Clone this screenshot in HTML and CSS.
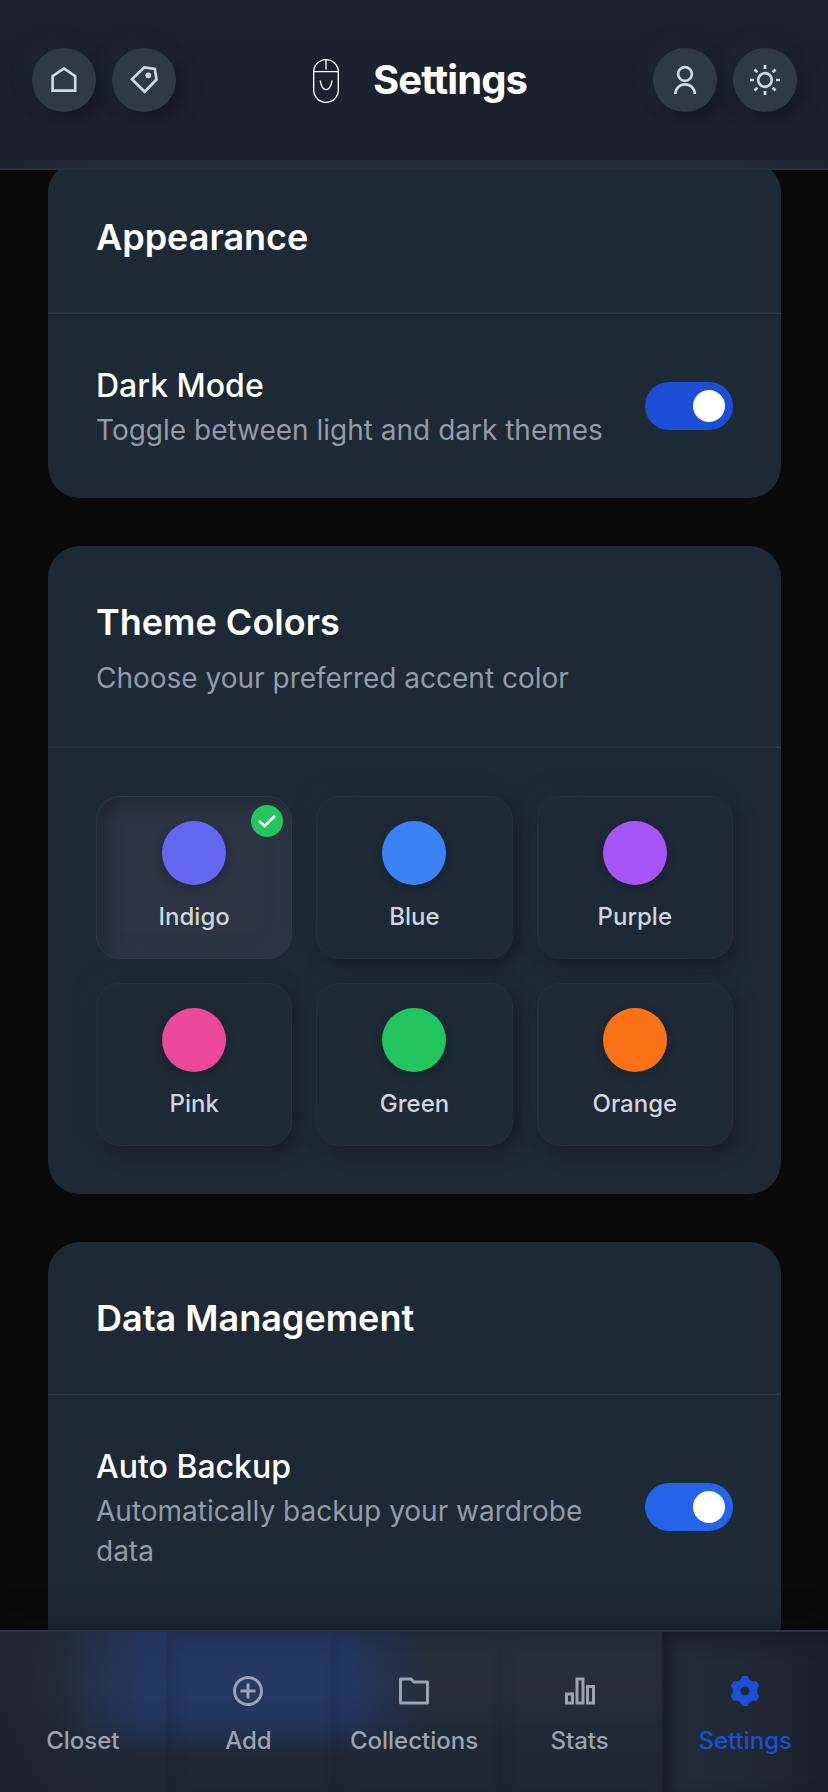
FILE: index.html
```html
<!DOCTYPE html>
<html lang="en">
<head>
<meta charset="utf-8">
<title>Settings</title>
<link rel="stylesheet" href="styles.css">
</head>
<body>
<div class="app">
  <header class="header">
    <div class="group">
      <button class="round" aria-label="Home"><svg viewBox="0 0 64 64"><path d="M20.6 42.7V28.2L32 20.5L43.2 28.2V42.7Z"/></svg></button>
      <button class="round" aria-label="Tags"><svg viewBox="0 0 64 64"><path d="M32.2 19.4L42.8 20.9L44.5 31.5L32.7 43.8L20 31.3Z"/><circle class="solid" cx="36.3" cy="27.3" r="2.9"/></svg></button>
    </div>
    <div class="brand">
      <svg class="logo" viewBox="0 0 26 44"><rect x=".7" y=".7" width="24.6" height="42.6" rx="12.3"/><path d="M.7 12.6H25.3M13 .7V10M7.2 21.8C8.3 27.5 10 30.6 13 30.6S17.9 27.5 19 21.8"/></svg>
      <h1>Settings</h1>
    </div>
    <div class="group">
      <button class="round" aria-label="Profile"><svg viewBox="0 0 64 64"><circle cx="32" cy="26" r="6.9"/><path d="M22.4 46A9.7 9.7 0 0 1 41.8 46"/></svg></button>
      <button class="round" aria-label="Theme"><svg viewBox="0 0 64 64"><circle cx="32" cy="32" r="6.8"/><path d="M32 17V21M32 43V47M17 32H21M43 32H47M21.5 21.5L24.3 24.3M39.7 39.7L42.5 42.5M21.5 42.5L24.3 39.7M39.7 24.3L42.5 21.5"/></svg></button>
    </div>
  </header>
  <div class="header-edge"></div>

  <main class="content">
    <section class="card">
      <div class="card-head"><h2>Appearance</h2></div>
      <div class="row">
        <div class="row-text"><h3>Dark Mode</h3><p>Toggle between light and dark themes</p></div>
        <span class="toggle deep"></span>
      </div>
    </section>

    <section class="card">
      <div class="card-head"><h2>Theme Colors</h2><p class="sub">Choose your preferred accent color</p></div>
      <div class="grid">
        <div class="tile selected"><i class="dot indigo"></i><span>Indigo</span><b class="check"><svg viewBox="0 0 32 32"><path d="M8 16L13.8 21L24 10.8"/></svg></b></div>
        <div class="tile"><i class="dot blue"></i><span>Blue</span></div>
        <div class="tile"><i class="dot purple"></i><span>Purple</span></div>
        <div class="tile"><i class="dot pink"></i><span>Pink</span></div>
        <div class="tile"><i class="dot green"></i><span>Green</span></div>
        <div class="tile"><i class="dot orange"></i><span>Orange</span></div>
      </div>
    </section>

    <section class="card last">
      <div class="card-head"><h2>Data Management</h2></div>
      <div class="row">
        <div class="row-text"><h3>Auto Backup</h3><p>Automatically backup your wardrobe data</p></div>
        <span class="toggle"></span>
      </div>
    </section>
  </main>

  <nav class="nav">
    <a class="item"><span class="icon-space"></span><span>Closet</span></a>
    <a class="item"><svg viewBox="0 0 24 24"><path d="M11 11V7H13V11H17V13H13V17H11V13H7V11H11ZM12 22C6.47715 22 2 17.5228 2 12C2 6.47715 6.47715 2 12 2C17.5228 2 22 6.47715 22 12C22 17.5228 17.5228 22 12 22ZM12 20C16.4183 20 20 16.4183 20 12C20 7.58172 16.4183 4 12 4C7.58172 4 4 7.58172 4 12C4 16.4183 7.58172 20 12 20Z"/></svg><span>Add</span></a>
    <a class="item"><svg viewBox="0 0 24 24"><path d="M12.4142 5H21C21.5523 5 22 5.44772 22 6V20C22 20.5523 21.5523 21 21 21H3C2.44772 21 2 20.5523 2 20V4C2 3.44772 2.44772 3 3 3H10.4142L12.4142 5ZM4 5V19H20V7H11.5858L9.58579 5H4Z"/></svg><span>Collections</span></a>
    <a class="item"><svg viewBox="0 0 24 24"><path d="M2 13H8V21H2V13ZM16 8H22V21H16V8ZM9 3H15V21H9V3ZM4 15V19H6V15H4ZM11 5V19H13V5H11ZM18 10V19H20V10H18Z"/></svg><span>Stats</span></a>
    <a class="item active"><svg viewBox="0 0 24 24"><path d="M9.95401 2.2106C11.2876 1.93144 12.6807 1.92263 14.0449 2.20785C14.2219 3.3674 14.9048 4.43892 15.9997 5.07103C17.0945 5.70313 18.364 5.75884 19.4566 5.3323C20.3858 6.37118 21.0747 7.58203 21.4997 8.87652C20.5852 9.60958 19.9997 10.736 19.9997 11.9992C19.9997 13.2632 20.5859 14.3902 21.5013 15.1232C21.29 15.7636 21.0104 16.3922 20.6599 16.9992C20.3094 17.6063 19.9049 18.1627 19.4559 18.6659C18.3634 18.2396 17.0943 18.2955 15.9997 18.9274C14.9057 19.559 14.223 20.6294 14.0453 21.7879C12.7118 22.067 11.3187 22.0758 9.95443 21.7906C9.77748 20.6311 9.09451 19.5595 7.99967 18.9274C6.90484 18.2953 5.63539 18.2396 4.54272 18.6662C3.61357 17.6273 2.92466 16.4164 2.49964 15.1219C3.41412 14.3889 3.99968 13.2624 3.99968 11.9992C3.99968 10.7353 3.41344 9.60827 2.49805 8.87524C2.70933 8.23482 2.98894 7.60629 3.33942 6.99923C3.68991 6.39217 4.09443 5.83576 4.54341 5.33257C5.63593 5.75881 6.90507 5.703 7.99967 5.07103C9.09364 4.43942 9.7764 3.3691 9.95401 2.2106ZM11.9997 14.9992C13.6565 14.9992 14.9997 13.6561 14.9997 11.9992C14.9997 10.3424 13.6565 8.99923 11.9997 8.99923C10.3428 8.99923 8.99968 10.3424 8.99968 11.9992C8.99968 13.6561 10.3428 14.9992 11.9997 14.9992Z"/></svg><span>Settings</span></a>
  </nav>
</div>
</body>
</html>
```

FILE: styles.css
```css
* { box-sizing: border-box; margin: 0; padding: 0; }
body { background: #0a0a0a; font-family: Inter, "Noto Sans", sans-serif; color: #fff; }
.app { display: flex; flex-direction: column; width: 828px; height: 1792px; overflow: hidden; position: relative; }

.header { flex: none; height: 160px; padding: 0 31px 0 32px; display: flex; align-items: center; justify-content: space-between; background: linear-gradient(#1d232e, #1b212b); }
.group { display: flex; gap: 16px; }
.round { width: 64px; height: 64px; border: 0; border-radius: 50%; background: #2f3a47; box-shadow: 8px 8px 16px rgba(17, 24, 34, .75), -6px -6px 16px rgba(32, 44, 56, .45); }
.round svg { display: block; width: 64px; height: 64px; fill: none; stroke: #d1d8e2; stroke-width: 2.7; }
.round .solid { fill: #d1d8e2; stroke: none; }
.brand { display: flex; align-items: center; gap: 34px; margin-left: 11px; }
.logo { width: 26px; height: 44px; fill: none; stroke: #fff; stroke-width: 1.3; stroke-linecap: round; margin-top: 2px; }
h1 { font-size: 40px; line-height: 56px; font-weight: 700; letter-spacing: -.9px; }
.header-edge { position: absolute; top: 160px; left: 0; right: 0; height: 10px; z-index: 2; border-bottom: 2px solid #26313d; background: linear-gradient(90deg, #1e222d, #202c38 100px, #202c38 728px, #20232e); }

.content { flex: 1; min-height: 0; overflow: hidden; padding: 1px 47px 0 48px; display: flex; flex-direction: column; gap: 48px; }
.card { flex: none; border-radius: 32px; background: #1e2936; }
.card.last { padding-bottom: 96px; }
.card-head { padding: 48px 48px 49.33px; box-shadow: inset 0 -1.4px #303c49; }
h2 { font-size: 36px; line-height: 56px; font-weight: 600; }
.sub { margin-top: 8px; }
p { font-size: 28px; line-height: 40px; color: #929ba8; }
.row { padding: 48px; display: flex; align-items: center; justify-content: space-between; }
.row-text { width: 510px; }
h3 { font-size: 32px; line-height: 48px; font-weight: 500; }
.toggle { width: 88px; height: 48px; border-radius: 24px; background: #2563eb; display: flex; align-items: center; justify-content: flex-end; padding: 8px; }
.toggle.deep { background: #1d4ed8; }
.toggle::after { content: ""; width: 32px; height: 32px; border-radius: 50%; background: #fff; }

.grid { padding: 48px; display: grid; grid-template-columns: repeat(3, 1fr); gap: 24px; }
.tile { position: relative; height: 163px; border: 1px solid #25303c; border-radius: 24px; padding-top: 24px; display: flex; flex-direction: column; align-items: center; gap: 16px; background: #1e2936; box-shadow: 8px 8px 16px rgba(24, 31, 42, .9), -8px -8px 16px rgba(35, 45, 57, .35); font-size: 24px; line-height: 32px; font-weight: 500; color: #d1d5db; }
.tile.selected { background: #2b3442; border-color: #2d3945; box-shadow: inset 8px 8px 16px #202935, inset -6px -6px 16px #2e3746; }
.dot { width: 64px; height: 64px; border-radius: 50%; box-shadow: 0 3px 8px rgba(15, 25, 38, .4); }
.indigo { background: #6366f1; }
.blue { background: #3b82f6; }
.purple { background: #a855f7; }
.pink { background: #ec4899; }
.green { background: #22c55e; }
.orange { background: #f97316; }
.check { position: absolute; top: 8px; right: 8px; width: 32px; height: 32px; border-radius: 50%; background: #22c55e; }
.check svg { display: block; fill: none; stroke: #fff; stroke-width: 2.7; }

.nav { flex: none; height: 162px; position: relative; z-index: 1; display: grid; grid-template-columns: repeat(5, 1fr); background: linear-gradient(#232c39, #262e3c 35%, #1f2935 65%, #1d2632); border-top: 2px solid #2b3541; box-shadow: 0 -4px 32px rgba(12, 14, 16, .4); }
/* glow of the accent button behind the glass bar */
.nav::before { content: ""; position: absolute; inset: 0; background: linear-gradient(#22355d, #243962 35%, #22345a 55%, transparent 78%); -webkit-mask-image: linear-gradient(90deg, transparent 55px, #000 145px, #000 345px, transparent 425px); mask-image: linear-gradient(90deg, transparent 55px, #000 145px, #000 345px, transparent 425px); }
.nav::after { content: ""; position: absolute; inset: 0; background: linear-gradient(90deg, #1c222d, transparent 90px, transparent 738px, #1c222e); opacity: .8; }
.item { position: relative; z-index: 1; display: flex; flex-direction: column; align-items: center; padding-top: 41px; gap: 16px; color: #9ca3af; font-size: 24px; line-height: 32px; font-weight: 500; box-shadow: inset 7px 7px 14px rgba(20, 27, 38, .18); }
.item:first-child { box-shadow: none; }
.item svg, .icon-space { width: 36px; height: 36px; fill: currentColor; }
.item.active { color: #1d4ed8; background: linear-gradient(90deg, #222d39, #1e2732 60%, #1b212c); box-shadow: inset 8px 8px 16px #161c27; }
```
